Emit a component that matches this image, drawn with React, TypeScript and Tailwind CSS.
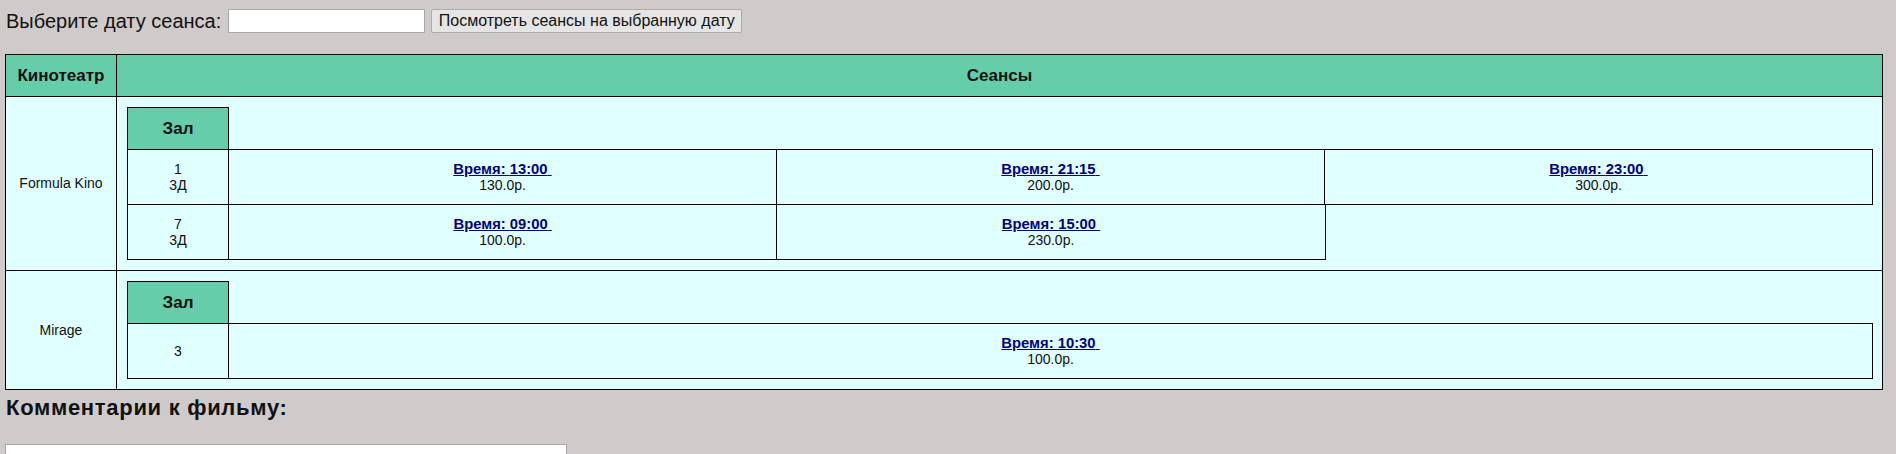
const font = "font-['Liberation_Sans',Arial,sans-serif]";

interface Session {
  time: string;
  price: string;
}

interface Hall {
  name: string[];
  sessions: Session[];
}

interface Cinema {
  name: string;
  cols: number;
  halls: Hall[];
}

const cinemas: Cinema[] = [
  {
    name: "Formula Kino",
    cols: 3,
    halls: [
      {
        name: ["1", "3Д"],
        sessions: [
          { time: "13:00", price: "130.0р." },
          { time: "21:15", price: "200.0р." },
          { time: "23:00", price: "300.0р." },
        ],
      },
      {
        name: ["7", "3Д"],
        sessions: [
          { time: "09:00", price: "100.0р." },
          { time: "15:00", price: "230.0р." },
        ],
      },
    ],
  },
  {
    name: "Mirage",
    cols: 1,
    halls: [
      {
        name: ["3"],
        sessions: [{ time: "10:30", price: "100.0р." }],
      },
    ],
  },
];

function SessionCell({ session }: { session?: Session }) {
  if (!session) {
    return <div className="flex-1" />;
  }
  return (
    <div className="flex flex-1 flex-col items-center justify-center border-y border-r border-black text-[14px] leading-[16px]">
      <a href="#" className="text-[14.8px] font-bold text-[#000080] underline">
        Время: {session.time}
        {"\u00a0"}
      </a>
      <span className="text-[#111]">{session.price}</span>
    </div>
  );
}

function HallTable({ cinema }: { cinema: Cinema }) {
  return (
    <div className="flex flex-col">
      <div className="flex h-[43px] w-[102px] items-center justify-center border border-black bg-[#66cdaa] text-[17px] font-bold">
        Зал
      </div>
      {cinema.halls.map((hall) => (
        <div key={hall.name.join("")} className="-mt-px flex h-[56px]">
          <div className="flex w-[102px] flex-col items-center justify-center border border-black text-[14px] leading-[16px]">
            {hall.name.map((line) => (
              <span key={line}>{line}</span>
            ))}
          </div>
          {Array.from({ length: cinema.cols }, (_, i) => (
            <SessionCell key={i} session={hall.sessions[i]} />
          ))}
        </div>
      ))}
    </div>
  );
}

export default function App() {
  return (
    <div className={`${font} min-h-[454px] bg-[#d0cbcb] text-[#111]`}>
      <div className="flex items-center pt-[9px] pl-[6px]">
        <span className="text-[20px] leading-[24px]">Выберите дату сеанса:</span>
        <input
          type="text"
          className="ml-[7px] h-[24px] w-[197px] border border-[#a9a9a9] bg-white"
        />
        <button className="ml-[6px] h-[24px] w-[311px] rounded-[2px] border border-[#adadad] bg-[#e5e5e5] text-[16px] leading-[20px] text-[#111]">
          Посмотреть сеансы на выбранную дату
        </button>
      </div>

      <div className="mt-[21px] ml-[5px] grid w-[1878px] grid-cols-[111px_1fr] border border-black bg-[#e0ffff]">
        <div className="flex h-[42px] items-center justify-center border-r border-b border-black bg-[#66cdaa] text-[17px] font-bold">
          Кинотеатр
        </div>
        <div className="flex h-[42px] items-center justify-center border-b border-black bg-[#66cdaa] text-[17px] font-bold">
          Сеансы
        </div>
        {cinemas.map((cinema, idx) => (
          <div key={cinema.name} className="contents">
            <div
              className={`flex items-center justify-center border-r border-black text-[14px] ${
                idx < cinemas.length - 1 ? "border-b" : ""
              }`}
            >
              {cinema.name}
            </div>
            <div
              className={`pt-[10px] pr-[9px] pb-[10px] pl-[10px] border-black ${
                idx < cinemas.length - 1 ? "border-b" : ""
              }`}
            >
              <HallTable cinema={cinema} />
            </div>
          </div>
        ))}
      </div>

      <h3 className="mt-[6px] pl-[6px] text-[22px] leading-[23px] font-bold tracking-[0.7px]">
        Комментарии к фильму:
      </h3>
      <textarea className="mt-[25px] ml-[5px] block h-[80px] w-[562px] border border-[#a9a9a9] bg-white" />
    </div>
  );
}
